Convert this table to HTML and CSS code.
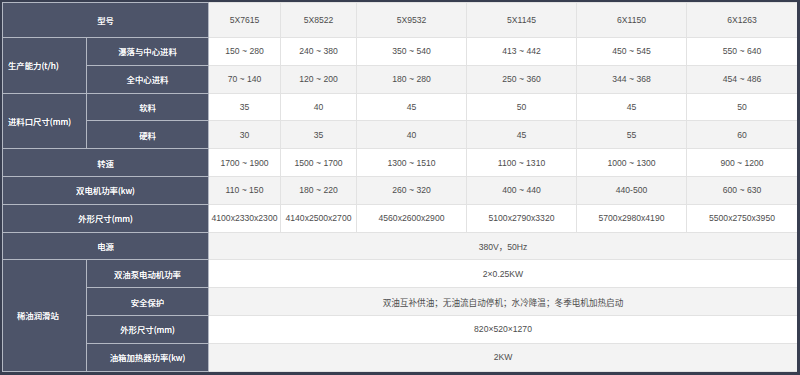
FILE: index.html
```html
<!DOCTYPE html>
<html lang="zh-CN">
<head>
<meta charset="utf-8">
<title>参数表</title>
<link rel="stylesheet" href="styles.css">
</head>
<body>
<div class="frame">
<table class="spec">
  <colgroup>
    <col class="c-group"><col class="c-sub"><col class="c-a"><col class="c-b"><col class="c-w"><col class="c-w"><col class="c-w"><col class="c-last">
  </colgroup>
  <tr class="r-head alt">
    <th colspan="2">型号</th>
    <td>5X7615</td><td>5X8522</td><td>5X9532</td><td>5X1145</td><td>6X1150</td><td>6X1263</td>
  </tr>
  <tr>
    <th rowspan="2" class="grp">生产能力(t/h)</th>
    <th>瀑落与中心进料</th>
    <td>150 ~ 280</td><td>240 ~ 380</td><td>350 ~ 540</td><td>413 ~ 442</td><td>450 ~ 545</td><td>550 ~ 640</td>
  </tr>
  <tr class="alt">
    <th>全中心进料</th>
    <td>70 ~ 140</td><td>120 ~ 200</td><td>180 ~ 280</td><td>250 ~ 360</td><td>344 ~ 368</td><td>454 ~ 486</td>
  </tr>
  <tr>
    <th rowspan="2" class="grp">进料口尺寸(mm)</th>
    <th>软料</th>
    <td>35</td><td>40</td><td>45</td><td>50</td><td>45</td><td>50</td>
  </tr>
  <tr class="alt">
    <th>硬料</th>
    <td>30</td><td>35</td><td>40</td><td>45</td><td>55</td><td>60</td>
  </tr>
  <tr>
    <th colspan="2">转速</th>
    <td>1700 ~ 1900</td><td>1500 ~ 1700</td><td>1300 ~ 1510</td><td>1100 ~ 1310</td><td>1000 ~ 1300</td><td>900 ~ 1200</td>
  </tr>
  <tr class="alt">
    <th colspan="2">双电机功率(kw)</th>
    <td>110 ~ 150</td><td>180 ~ 220</td><td>260 ~ 320</td><td>400 ~ 440</td><td>440-500</td><td>600 ~ 630</td>
  </tr>
  <tr>
    <th colspan="2">外形尺寸(mm)</th>
    <td>4100x2330x2300</td><td>4140x2500x2700</td><td>4560x2600x2900</td><td>5100x2790x3320</td><td>5700x2980x4190</td><td>5500x2750x3950</td>
  </tr>
  <tr class="alt">
    <th colspan="2">电源</th>
    <td colspan="6">380V，50Hz</td>
  </tr>
  <tr>
    <th rowspan="4" class="grp grp-wide">稀油润滑站</th>
    <th>双油泵电动机功率</th>
    <td colspan="6">2×0.25KW</td>
  </tr>
  <tr class="alt">
    <th>安全保护</th>
    <td colspan="6">双油互补供油；无油流自动停机；水冷降温；冬季电机加热启动</td>
  </tr>
  <tr>
    <th>外形尺寸(mm)</th>
    <td colspan="6">820×520×1270</td>
  </tr>
  <tr class="alt">
    <th>油箱加热器功率(kw)</th>
    <td colspan="6">2KW</td>
  </tr>
</table>
</div>
</body>
</html>
```
FILE: styles.css
```css
html, body {
  margin: 0;
  padding: 0;
  background: #ffffff;
}
.frame {
  width: 800px;
  height: 375px;
  box-sizing: border-box;
  border: 2px solid #383e50;
  border-right-width: 3px;
  border-bottom-width: 3px;
  background: #383e50;
  overflow: hidden;
}
.spec {
  width: 795px;
  table-layout: fixed;
  border-collapse: collapse;
  font-family: "Segoe UI", "Liberation Sans", "Noto Sans CJK SC", sans-serif;
  font-size: 8.6px;
}
.c-group { width: 84px; }
.c-sub { width: 122px; }
.c-a { width: 72px; }
.c-b { width: 76px; }
.c-w { width: 110px; }
.c-last { width: 111px; }
.spec tr { height: 27.8px; }
.spec tr.r-head { height: 35px; }
.spec th, .spec td {
  padding: 0;
  text-align: center;
  vertical-align: middle;
  white-space: nowrap;
  overflow: hidden;
}
.spec th {
  background: #4d5469;
  color: #ffffff;
  font-weight: normal;
  border: 1px solid #b3b8c3;
  font-family: "Noto Sans CJK SC", "Liberation Sans", sans-serif;
  font-size: 8.4px;
  text-shadow: 0 0 0.5px #ffffff;
}
.spec td {
  background: #ffffff;
  color: #4d4d4d;
  border: 1px solid #e2e2e2;
}
.spec tr.alt td {
  background: #f3f3f3;
}
.spec th.grp {
  text-align: left;
  padding-left: 5px;
}
.spec th.grp-wide {
  padding-left: 14px;
}
```
